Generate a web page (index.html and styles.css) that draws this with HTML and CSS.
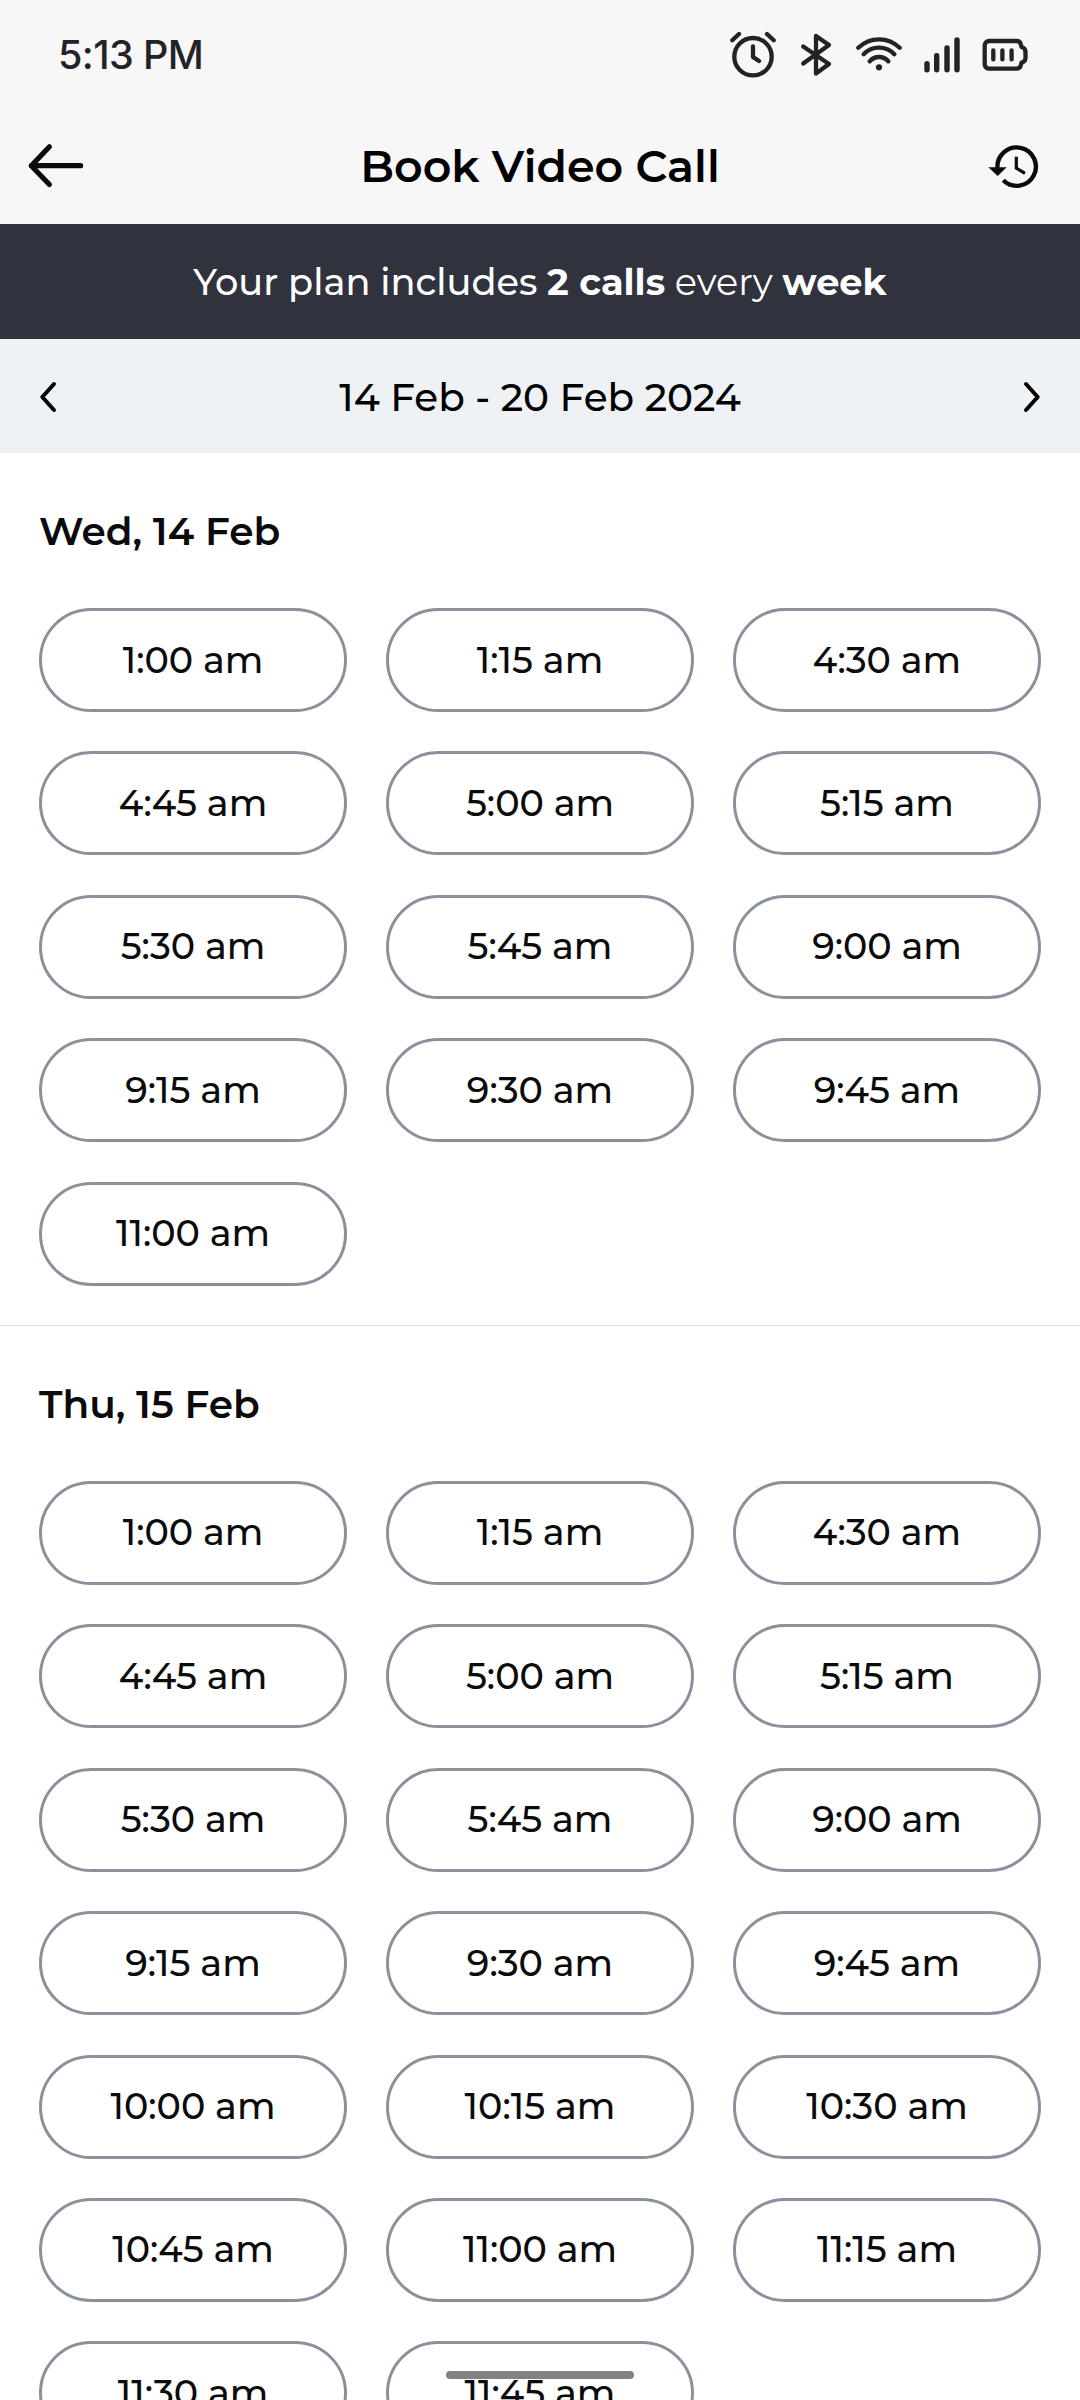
FILE: index.html
```html
<!DOCTYPE html>
<html lang="en">
<head>
  <meta charset="UTF-8">
  <title>Book Video Call</title>
  <link rel="stylesheet" href="styles.css">
</head>
<body>
  <div class="status-bar">
    <span class="clock">5:13 PM</span>
    <div class="status-icons">
      <svg width="48" height="48" viewBox="0 0 48 48">
        <circle cx="24" cy="25.7" r="18.7"/>
        <path d="M3.3 9.3L10 3M38 3l6.7 6.3M24 15.5V26l6 4"/>
      </svg>
      <svg width="34" height="48" viewBox="0 0 34 48">
        <path d="M4.2 15.5L30 33L17 42.5V5L30 14L4.2 32.5"/>
      </svg>
      <svg width="47" height="48" viewBox="0 0 47 48">
        <path d="M3.3 16.8A29.4 29.4 0 0 1 44.7 16.8M8.7 23.3A21 21 0 0 1 39.3 23.3M14.7 30.3A12.2 12.2 0 0 1 33.3 30.3"/>
        <circle class="dot" cx="24" cy="36.3" r="3.1"/>
      </svg>
      <svg width="36" height="48" viewBox="0 0 36 48">
        <path class="bars" d="M3 32.6V38.7M12.7 24.6V38.7M23 17V38.7M33 9V38.7"/>
      </svg>
      <svg width="47" height="48" viewBox="0 0 47 48">
        <path d="M7.2 10H34.5q3.8 0 4.5 4l.5 2q4 1 4 5v5.7q0 4-4 5l-.5 2q-.7 4-4.5 4H7.2a4.5 4.5 0 0 1-4.5-4.5V14.5A4.5 4.5 0 0 1 7.2 10z"/>
        <path d="M11.3 19.3V28.4M20.4 19.3V28.4M29.6 19.3V28.4"/>
      </svg>
    </div>
  </div>

  <header class="header">
    <svg class="back" width="58" height="46" viewBox="0 0 58 46">
      <path d="M22.4 3.8L4.3 22.7L22.4 41.5M4.3 22.7H53.6"/>
    </svg>
    <h1>Book Video Call</h1>
    <svg class="history" width="52" height="46" viewBox="0 0 52 46">
      <path class="ring" d="M10.5 25A19.2 19.2 0 1 1 16.2 37.3"/>
      <path class="hand" d="M29.3 13.7V25L38 30.4"/>
      <path class="tip" d="M1.3 24.3H19.7L10.7 33z"/>
    </svg>
  </header>

  <div class="banner"><p><span class="lead">Your plan includes</span> <b>2 calls</b> every <b>week</b></p></div>

  <div class="pager">
    <svg width="20" height="34" viewBox="0 0 20 34"><path d="M16 4L4.3 17L16 30"/></svg>
    <span>14 Feb - 20 Feb 2024</span>
    <svg width="20" height="34" viewBox="0 0 20 34"><path d="M4 4L15.7 17L4 30"/></svg>
  </div>

  <section class="day">
    <h2>Wed, 14 Feb</h2>
    <div class="slots">
      <button>1:00 am</button>
      <button>1:15 am</button>
      <button>4:30 am</button>
      <button>4:45 am</button>
      <button>5:00 am</button>
      <button>5:15 am</button>
      <button>5:30 am</button>
      <button>5:45 am</button>
      <button>9:00 am</button>
      <button>9:15 am</button>
      <button>9:30 am</button>
      <button>9:45 am</button>
      <button>11:00 am</button>
    </div>
  </section>

  <section class="day">
    <h2>Thu, 15 Feb</h2>
    <div class="slots">
      <button>1:00 am</button>
      <button>1:15 am</button>
      <button>4:30 am</button>
      <button>4:45 am</button>
      <button>5:00 am</button>
      <button>5:15 am</button>
      <button>5:30 am</button>
      <button>5:45 am</button>
      <button>9:00 am</button>
      <button>9:15 am</button>
      <button>9:30 am</button>
      <button>9:45 am</button>
      <button>10:00 am</button>
      <button>10:15 am</button>
      <button>10:30 am</button>
      <button>10:45 am</button>
      <button>11:00 am</button>
      <button>11:15 am</button>
      <button>11:30 am</button>
      <button>11:45 am</button>
    </div>
  </section>

  <div class="home-bar"></div>
</body>
</html>
```
FILE: styles.css
```css
* { box-sizing: border-box; }
body {
  margin: 0;
  height: 2400px;
  overflow: hidden;
  background: #fff;
  color: #0b0b0b;
  font-family: Montserrat, Inter, sans-serif;
}
svg { display: block; fill: none; stroke-linecap: round; stroke-linejoin: round; }

/* status bar */
.status-bar {
  display: flex; align-items: center; justify-content: space-between;
  height: 110px; padding: 0 51px 0 58px;
  background: #f7f7f7; color: #222227;
}
.clock { font-family: Inter, sans-serif; font-size: 39.5px; font-weight: 500; letter-spacing: -0.6px; }
.status-icons { display: flex; gap: 22px; }
.status-icons svg { stroke: #222227; stroke-width: 4.3; }
.status-icons .bars { stroke-width: 5.4; }
.status-icons .dot { fill: #222227; stroke: none; }

/* title row */
.header {
  display: grid; grid-template-columns: 1fr auto 1fr; align-items: center;
  height: 114px; padding: 0 27px 2px;
  background: #f7f7f7;
}
.header h1 { margin: 0; font-size: 44.4px; font-weight: 600; color: #000; line-height: 50px; }
.back { stroke: #0b0b0b; stroke-width: 5.2; }
.history { justify-self: end; margin-right: 14px; stroke: #0b0b0b; stroke-linecap: butt; stroke-linejoin: miter; }
.history .ring { stroke-width: 4.4; }
.history .hand { stroke-width: 3.2; }
.history .tip { fill: #0b0b0b; stroke: none; }

.banner {
  display: flex; align-items: center; justify-content: center;
  height: 115px;
  background: #30333e; color: #fff;
  font-size: 36.75px;
}
.banner p { margin: 0; }
.banner .lead { font-weight: 500; }
.banner b { font-weight: 700; }

.pager {
  display: flex; align-items: center; justify-content: space-between;
  height: 114px; padding: 2px 38px 0;
  background: #eef2f5; color: #000;
  font-size: 39px; font-weight: 500;
}
.pager svg { stroke: #000; stroke-width: 4; }

/* slots of one day */
.day { padding: 55px 39px 39.4px; border-bottom: 1px solid #dfe2e4; }
.day h2 { margin: 0 0 53px; font-size: 39px; line-height: 47px; font-weight: 600; }
.slots { display: grid; grid-template-columns: repeat(3, 1fr); gap: 39.4px 39px; }
.slots button {
  height: 104px; padding: 0 0 1px;
  border: 3px solid #8a919d; border-radius: 52px;
  background: #fff; color: #0b0b0b;
  font-family: inherit; font-size: 36.5px; font-weight: 500;
}

.home-bar {
  position: absolute; left: 446px; top: 2371px;
  width: 188px; height: 8px; border-radius: 4px;
  background: #828282;
}
```
